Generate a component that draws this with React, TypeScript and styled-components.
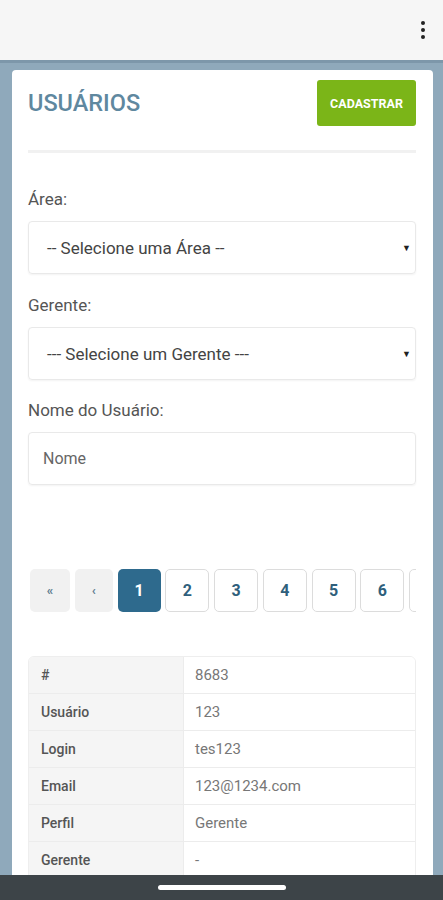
import * as React from 'react'
import styled, {createGlobalStyle} from 'styled-components'

const GlobalStyle = createGlobalStyle`
  html, body {
    margin: 0;
    padding: 0;
    background: #8fa9bb;
    font-family: Roboto, "Noto Sans", "Liberation Sans", sans-serif;
  }
`

// Browser top bar
const TopBar = styled.div`
  height: 60px;
  background: #f6f6f6;
  display: flex;
  align-items: center;
  justify-content: flex-end;
  padding-right: 18px;
`

const Kebab = styled.div`
  display: flex;
  flex-direction: column;
  gap: 3px;
  span {
    width: 4px;
    height: 4px;
    border-radius: 50%;
    background: #222;
  }
`

const Page = styled.div`
  min-height: 830px;
  border-top: 3px solid #7d97aa;
  padding: 7px 10px 0 12px;
`

const Card = styled.div`
  background: #fff;
  border-radius: 4px 4px 0 0;
  padding: 10px 17px 30px 16px;
`

const Header = styled.div`
  display: flex;
  justify-content: space-between;
  align-items: center;
`

const Title = styled.h1`
  margin: 0;
  font-size: 23.5px;
  font-weight: 500;
  color: #5f889f;
`

const AddButton = styled.button`
  width: 99px;
  height: 46px;
  border: none;
  border-radius: 3px;
  background: #7bb518;
  color: #fff;
  font-family: Roboto, sans-serif;
  font-weight: 700;
  font-size: 12.5px;
  padding: 0;
`

const Divider = styled.hr`
  border: none;
  height: 3px;
  background: #f1f1f1;
  margin: 24px 0 0;
`

const Field = styled.div<{$gap: number}>`
  margin-top: ${({$gap}) => $gap}px;
`

const Label = styled.label`
  display: block;
  font-size: 17px;
  line-height: 22px;
  color: #555;
  margin-bottom: 11px;
`

const Box = styled.div`
  height: 51px;
  border: 1px solid #e9e9e9;
  border-radius: 4px;
  box-shadow: 0 1px 2px rgba(0, 0, 0, 0.05);
  display: flex;
  align-items: center;
  justify-content: space-between;
  font-size: 17px;
  color: #444;
`

const SelectText = styled.span`
  padding-left: 18px;
`

const Arrow = styled.span`
  font-size: 9px;
  color: #222;
  padding-right: 4px;
`

const Placeholder = styled.span`
  padding-left: 14px;
  font-size: 16px;
  color: #666;
`

const Pager = styled.div`
  margin-top: 84px;
  display: flex;
  gap: 4.75px;
  overflow: hidden;
  padding-left: 2px;
`

const PageBtn = styled.div<{$variant: 'nav' | 'active' | 'plain'; $w: number}>`
  flex: none;
  width: ${({$w}) => $w}px;
  height: 43px;
  box-sizing: border-box;
  border-radius: 5px;
  display: flex;
  align-items: center;
  justify-content: center;
  font-weight: 700;
  font-size: ${({$variant}) => ($variant === 'nav' ? '13px' : '16px')};
  background: ${({$variant}) =>
    $variant === 'nav' ? '#f1f1f1' : $variant === 'active' ? '#2e6a8d' : '#fff'};
  color: ${({$variant}) =>
    $variant === 'nav' ? '#5f7d90' : $variant === 'active' ? '#fff' : '#2f5f7c'};
  border: ${({$variant}) => ($variant === 'plain' ? '1px solid #dcdcdc' : 'none')};
`

const Table = styled.div`
  margin-top: 44px;
  border: 1px solid #eee;
  border-radius: 6px;
  overflow: hidden;
  display: grid;
  grid-template-columns: 154px 1fr;
`

const Cell = styled.div<{$head?: boolean}>`
  height: 36px;
  border-bottom: 1px solid #ececec;
  display: flex;
  align-items: center;
  padding-left: ${({$head}) => ($head ? '12px' : '11px')};
  font-size: ${({$head}) => ($head ? '14px' : '15px')};
  background: ${({$head}) => ($head ? '#f5f5f5' : '#fff')};
  color: ${({$head}) => ($head ? '#555' : '#777')};
  font-weight: ${({$head}) => ($head ? 500 : 400)};
  border-left: ${({$head}) => ($head ? 'none' : '1px solid #ececec')};
`

// System navigation bar overlaying the page
const NavBar = styled.div`
  position: fixed;
  left: 0;
  right: 0;
  bottom: 0;
  height: 25px;
  background: #3d4448;
  display: flex;
  justify-content: center;
  align-items: center;
`

const Pill = styled.div`
  width: 128px;
  height: 5px;
  border-radius: 3px;
  background: #fff;
`

const rows: [string, string][] = [
  ['#', '8683'],
  ['Usuário', '123'],
  ['Login', 'tes123'],
  ['Email', '123@1234.com'],
  ['Perfil', 'Gerente'],
  ['Gerente', '-'],
]

export default function App() {
  return (
    <>
      <GlobalStyle />
      <TopBar>
        <Kebab><span /><span /><span /></Kebab>
      </TopBar>
      <Page>
        <Card>
          <Header>
            <Title>USUÁRIOS</Title>
            <AddButton>CADASTRAR</AddButton>
          </Header>
          <Divider />

          <Field $gap={35}>
            <Label>Área:</Label>
            <Box>
              <SelectText>-- Selecione uma Área --</SelectText>
              <Arrow>▼</Arrow>
            </Box>
          </Field>
          <Field $gap={20}>
            <Label>Gerente:</Label>
            <Box>
              <SelectText>--- Selecione um Gerente ---</SelectText>
              <Arrow>▼</Arrow>
            </Box>
          </Field>
          <Field $gap={19}>
            <Label>Nome do Usuário:</Label>
            <Box>
              <Placeholder>Nome</Placeholder>
            </Box>
          </Field>

          <Pager>
            <PageBtn $variant="nav" $w={40}>«</PageBtn>
            <PageBtn $variant="nav" $w={38}>‹</PageBtn>
            <PageBtn $variant="active" $w={43}>1</PageBtn>
            {[2, 3, 4, 5, 6, 7].map(n => (
              <PageBtn key={n} $variant="plain" $w={44}>{n}</PageBtn>
            ))}
          </Pager>

          <Table>
            {rows.map(([k, v]) => (
              <React.Fragment key={k}>
                <Cell $head>{k}</Cell>
                <Cell>{v}</Cell>
              </React.Fragment>
            ))}
          </Table>
        </Card>
      </Page>
      <NavBar><Pill /></NavBar>
    </>
  )
}
